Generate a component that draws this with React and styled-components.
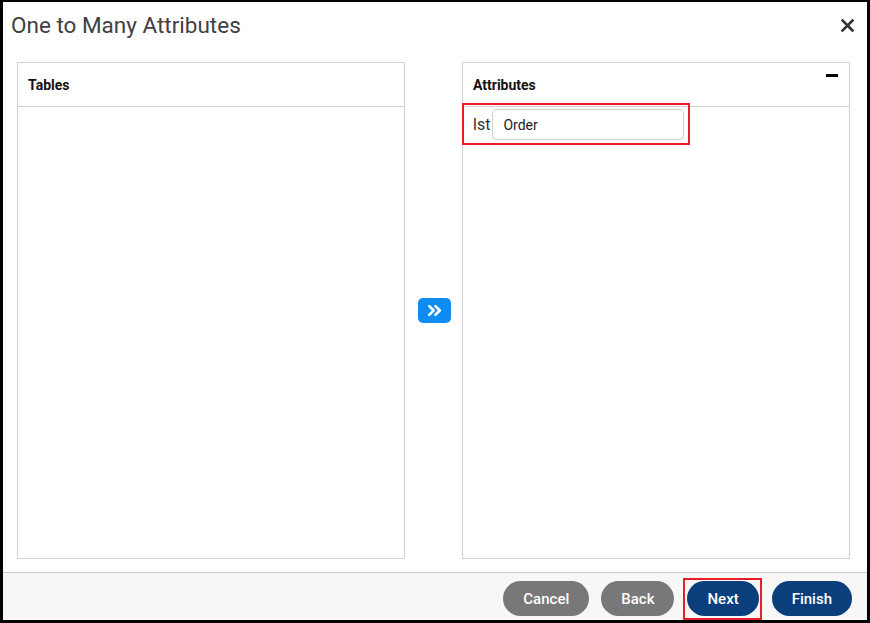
import React from 'react';
import styled, { createGlobalStyle } from "styled-components"
import { ChevronsRight } from "lucide-react"

const GlobalStyle = createGlobalStyle`
    html, body {
        margin: 0;
        padding: 0;
        background: #000;
    }
    * {
        box-sizing: border-box;
    }
`

const App = () => {
    return (
        <>
            <GlobalStyle />
            <Frame>
                <TitleBar>
                    <Title>One to Many Attributes</Title>
                    <CloseButton aria-label="Close">
                        <svg width="13" height="13" viewBox="0 0 13 13">
                            <path d="M1.5 1.5 L11.5 11.5 M11.5 1.5 L1.5 11.5" stroke="#333" strokeWidth="2.6" strokeLinecap="square" />
                        </svg>
                    </CloseButton>
                </TitleBar>
                <Body>
                    <Panel>
                        <PanelHeader>Tables</PanelHeader>
                        <PanelBody />
                    </Panel>
                    <Middle>
                        <MoveButton aria-label="Move">
                            <ChevronsRight size={21} strokeWidth={3} color="#fff" />
                        </MoveButton>
                    </Middle>
                    <Panel>
                        <PanelHeader>
                            Attributes
                            <Collapse />
                        </PanelHeader>
                        <PanelBody>
                            <AttrRow>
                                <AttrLabel>lst</AttrLabel>
                                <AttrInput defaultValue="Order" />
                            </AttrRow>
                        </PanelBody>
                    </Panel>
                </Body>
                <Footer>
                    <Button variant="gray">Cancel</Button>
                    <Button variant="gray">Back</Button>
                    <Highlight>
                        <Button variant="blue">Next</Button>
                    </Highlight>
                    <Button variant="blue">Finish</Button>
                </Footer>
            </Frame>
        </>
    )
}

const Frame = styled.div`
    width: 870px;
    height: 623px;
    background: #fff;
    border-style: solid;
    border-color: #000;
    border-width: 2px 3px 3px 3px;
    display: flex;
    flex-direction: column;
    font-family: Roboto, "Liberation Sans", sans-serif;
`

const TitleBar = styled.div`
    height: 45px;
    display: flex;
    align-items: center;
    justify-content: space-between;
    padding: 0 13px 0 8px;
`

const Title = styled.h1`
    margin: 0;
    font-size: 22.5px;
    font-weight: 400;
    color: #404040;
`

const CloseButton = styled.button`
    border: none;
    background: none;
    padding: 0;
    margin-top: 1px;
    display: flex;
    cursor: pointer;
`

const Body = styled.div`
    flex: 1;
    display: flex;
    align-items: stretch;
    padding: 15px 17px 13px 14px;
`

const Panel = styled.div`
    width: 388px;
    border: 1px solid #d2d2d2;
    display: flex;
    flex-direction: column;
`

const PanelHeader = styled.div`
    height: 44px;
    flex-shrink: 0;
    display: flex;
    align-items: center;
    justify-content: space-between;
    padding: 0 10px;
    border-bottom: 1px solid #d2d2d2;
    font-size: 14px;
    font-weight: 700;
    color: #111;
`

const Collapse = styled.span`
    width: 12px;
    height: 3px;
    background: #000;
    margin-top: -18px;
    margin-right: 1px;
`

const PanelBody = styled.div`
    flex: 1;
`

const Middle = styled.div`
    flex: 1;
    display: flex;
    align-items: center;
    justify-content: center;
    padding-left: 1px;
`

const MoveButton = styled.button`
    width: 33px;
    height: 25px;
    border: none;
    border-radius: 5px;
    background: #0e8cf4;
    display: flex;
    align-items: center;
    justify-content: center;
    padding: 0;
    cursor: pointer;
`

const AttrRow = styled.div`
    width: 228px;
    margin: -4px 0 0 -1px;
    border: 2px solid #ec1c24;
    display: flex;
    align-items: center;
    gap: 2px;
    padding: 4px 4px 3px 9px;
`

const AttrLabel = styled.span`
    font-size: 16px;
    color: #333;
`

const AttrInput = styled.input`
    flex: 1;
    min-width: 0;
    width: 100%;
    height: 31px;
    border: 1px solid #cfcfcf;
    border-radius: 4px;
    padding: 0 10px;
    font-family: inherit;
    font-size: 14px;
    color: #222;
    outline: none;
`

const Footer = styled.div`
    height: 48px;
    flex-shrink: 0;
    background: #f7f7f7;
    border-top: 1px solid #cbcbcb;
    display: flex;
    justify-content: flex-end;
    align-items: flex-start;
    gap: 12px;
    padding: 8px 15px 0 0;
`

const Button = styled.button`
    height: 35px;
    padding: 0 20px;
    border: none;
    border-radius: 18px;
    font-family: inherit;
    font-size: 15px;
    font-weight: 500;
    color: #fff;
    cursor: pointer;
    background: ${({ variant }) => variant === "blue" ? "#0a3f7b" : "#787878"};
`

const Highlight = styled.span`
    display: flex;
    border: 2px solid #ec1c24;
    padding: 1px 1px 1px 2px;
    margin: -3px -2px 0 -3px;
    height: 42px;
`

export default App
